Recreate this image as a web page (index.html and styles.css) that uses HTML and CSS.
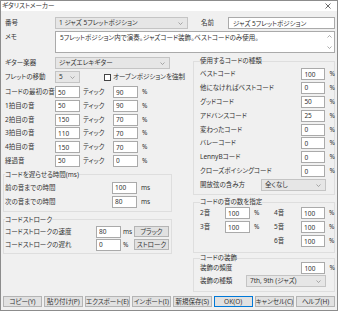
FILE: index.html
```html
<!DOCTYPE html>
<html lang="ja">

<head>
    <meta charset="UTF-8" />
    <title>ギタリストメーカー</title>
    <link rel="stylesheet" href="styles.css">
</head>

<body>
    <div class="window">
        <div class="titlebar">
            <span class="title">ギタリストメーカー</span>
            <svg class="close" width="6" height="6" viewBox="0 0 6 6"><path d="M0.5 0.5L5.5 5.5M5.5 0.5L0.5 5.5" stroke="#444" stroke-width="0.8" /></svg>
        </div>

        <div class="dialog">
            <div class="row head">
                <span class="lbl w50">番号</span>
                <div class="combo c-num"><span>1 ジャズ 5フレットポジション</span><svg class="chev" width="5" height="3" viewBox="0 0 5 3"><path d="M0.5 0.5L2.5 2.5L4.5 0.5" /></svg></div>
                <span class="lbl name-lbl">名前</span>
                <input class="txt name-in" type="text" value="ジャズ 5フレットポジション" />
            </div>

            <div class="memo-row">
                <span class="lbl w50 memo-lbl">メモ</span>
                <div class="memo">
                    <div class="memo-text">5フレットポジション内で演奏。ジャズコード装飾。ベストコードのみ使用。</div>
                    <div class="scroll">
                        <svg width="5" height="3" viewBox="0 0 5 3"><path d="M0.5 2.5L2.5 0.5L4.5 2.5" /></svg>
                        <svg width="5" height="3" viewBox="0 0 5 3"><path d="M0.5 0.5L2.5 2.5L4.5 0.5" /></svg>
                    </div>
                </div>
            </div>

            <div class="main">
                <!-- left side -->
                <div class="left">
                    <div class="row plain">
                        <span class="lbl w50">ギター楽器</span>
                        <div class="combo c-guitar"><span>ジャズエレキギター</span><svg class="chev" width="5" height="3" viewBox="0 0 5 3"><path d="M0.5 0.5L2.5 2.5L4.5 0.5" /></svg></div>
                    </div>
                    <div class="row plain fret">
                        <span class="lbl w50">フレットの移動</span>
                        <div class="combo c-fret"><span>5</span><svg class="chev" width="5" height="3" viewBox="0 0 5 3"><path d="M0.5 0.5L2.5 2.5L4.5 0.5" /></svg></div>
                        <span class="check"></span>
                        <span class="lbl">オープンポジションを強制</span>
                    </div>

                    <div class="row plain tick first">
                        <span class="lbl w50">コードの最初の音</span>
                        <input class="txt num" type="text" value="50" />
                        <span class="unit-tick">ティック</span>
                        <input class="txt num" type="text" value="90" />
                        <span class="unit">%</span>
                    </div>
                    <div class="row plain tick">
                        <span class="lbl w50">1拍目の音</span>
                        <input class="txt num" type="text" value="50" />
                        <span class="unit-tick">ティック</span>
                        <input class="txt num" type="text" value="90" />
                        <span class="unit">%</span>
                    </div>
                    <div class="row plain tick">
                        <span class="lbl w50">2拍目の音</span>
                        <input class="txt num" type="text" value="150" />
                        <span class="unit-tick">ティック</span>
                        <input class="txt num" type="text" value="70" />
                        <span class="unit">%</span>
                    </div>
                    <div class="row plain tick">
                        <span class="lbl w50">3拍目の音</span>
                        <input class="txt num" type="text" value="110" />
                        <span class="unit-tick">ティック</span>
                        <input class="txt num" type="text" value="70" />
                        <span class="unit">%</span>
                    </div>
                    <div class="row plain tick">
                        <span class="lbl w50">4拍目の音</span>
                        <input class="txt num" type="text" value="150" />
                        <span class="unit-tick">ティック</span>
                        <input class="txt num" type="text" value="70" />
                        <span class="unit">%</span>
                    </div>
                    <div class="row plain tick">
                        <span class="lbl w50">経過音</span>
                        <input class="txt num" type="text" value="50" />
                        <span class="unit-tick">ティック</span>
                        <input class="txt num" type="text" value="0" />
                        <span class="unit">%</span>
                    </div>

                    <fieldset class="group delay">
                        <legend>コードを遅らせる時間(ms)</legend>
                        <div class="row">
                            <span class="lbl w-delay">前の音までの時間</span>
                            <input class="txt num" type="text" value="100" />
                            <span class="unit">ms</span>
                        </div>
                        <div class="row gap2">
                            <span class="lbl w-delay">次の音までの時間</span>
                            <input class="txt num" type="text" value="80" />
                            <span class="unit">ms</span>
                        </div>
                    </fieldset>

                    <fieldset class="group stroke">
                        <legend>コードストローク</legend>
                        <div class="row">
                            <span class="lbl w-stroke">コードストロークの速度</span>
                            <input class="txt num" type="text" value="80" />
                            <span class="unit-s">ms</span>
                            <button class="small-btn">ブラック</button>
                        </div>
                        <div class="row gap1">
                            <span class="lbl w-stroke">コードストロークの遅れ</span>
                            <input class="txt num" type="text" value="0" />
                            <span class="unit-s">%</span>
                            <button class="small-btn">ストローク</button>
                        </div>
                    </fieldset>
                </div>

                <!-- right side -->
                <div class="right">
                    <fieldset class="group kinds">
                        <legend>使用するコードの種類</legend>
                        <div class="row"><span class="lbl grow">ベストコード</span><input class="txt num-r" type="text" value="100" /><span class="unit-r">%</span></div>
                        <div class="row"><span class="lbl grow">他になければベストコード</span><input class="txt num-r" type="text" value="0" /><span class="unit-r">%</span></div>
                        <div class="row"><span class="lbl grow">グッドコード</span><input class="txt num-r" type="text" value="50" /><span class="unit-r">%</span></div>
                        <div class="row"><span class="lbl grow">アドバンスコード</span><input class="txt num-r" type="text" value="25" /><span class="unit-r">%</span></div>
                        <div class="row"><span class="lbl grow">変わったコード</span><input class="txt num-r" type="text" value="0" /><span class="unit-r">%</span></div>
                        <div class="row"><span class="lbl grow">バレーコード</span><input class="txt num-r" type="text" value="0" /><span class="unit-r">%</span></div>
                        <div class="row"><span class="lbl grow">LennyBコード</span><input class="txt num-r" type="text" value="0" /><span class="unit-r">%</span></div>
                        <div class="row"><span class="lbl grow">クローズボイシングコード</span><input class="txt num-r" type="text" value="0" /><span class="unit-r">%</span></div>
                        <div class="row open">
                            <span class="lbl w-open">開放弦の含み方</span>
                            <div class="combo c-open"><span>全くなし</span><svg class="chev" width="5" height="3" viewBox="0 0 5 3"><path d="M0.5 0.5L2.5 2.5L4.5 0.5" /></svg></div>
                        </div>
                    </fieldset>

                    <fieldset class="group notes">
                        <legend>コードの音の数を指定</legend>
                        <div class="note-grid">
                            <span class="lbl">2音</span><input class="txt num" type="text" value="100" /><span class="unit">%</span>
                            <span class="lbl">4音</span><input class="txt num-r" type="text" value="100" /><span class="unit">%</span>
                            <span class="lbl">3音</span><input class="txt num" type="text" value="100" /><span class="unit">%</span>
                            <span class="lbl">5音</span><input class="txt num-r" type="text" value="100" /><span class="unit">%</span>
                            <span></span><span></span><span></span>
                            <span class="lbl">6音</span><input class="txt num-r" type="text" value="100" /><span class="unit">%</span>
                        </div>
                    </fieldset>

                    <fieldset class="group deco">
                        <legend>コードの装飾</legend>
                        <div class="row"><span class="lbl grow">装飾の頻度</span><input class="txt num-r" type="text" value="100" /><span class="unit-r">%</span></div>
                        <div class="row gap1">
                            <span class="lbl w-deco">装飾の種類</span>
                            <div class="combo c-deco"><span>7th, 9th (ジャズ)</span><svg class="chev" width="5" height="3" viewBox="0 0 5 3"><path d="M0.5 0.5L2.5 2.5L4.5 0.5" /></svg></div>
                        </div>
                    </fieldset>
                </div>
            </div>

            <div class="buttons">
                <button>コピー(Y)</button>
                <button>貼り付け(P)</button>
                <button>エクスポート(E)</button>
                <button>インポート(I)</button>
                <button>新規保存(S)</button>
                <button class="default">OK(O)</button>
                <button>キャンセル(C)</button>
                <button>ヘルプ(H)</button>
            </div>
        </div>
    </div>
</body>

</html>
```

FILE: styles.css
```css
* {
    box-sizing: border-box;
}

body {
    margin: 0;
    font-family: "Noto Sans", "Noto Sans CJK JP", sans-serif;
    font-size: 6.5px;
    font-feature-settings: "palt";
    line-height: 8px;
    color: #333;
}

/* Window frame */
.window {
    width: 338px;
    height: 311px;
    border: 1px solid #8c8c8c;
    background: #f0f0f0;
    display: flex;
    flex-direction: column;
}

.titlebar {
    height: 10px;
    flex: none;
    background: #fff;
    display: flex;
    align-items: center;
    justify-content: space-between;
    padding: 0 6px 0 1px;
}

.dialog {
    flex: 1;
    display: flex;
    flex-direction: column;
    padding: 6px 2px 3px 2px;
}

/* Generic rows */
.row {
    display: flex;
    align-items: center;
    height: 12px;
}

.lbl {
    flex: none;
    white-space: nowrap;
}

.grow {
    flex: 1;
}

.w50 {
    width: 50px;
}

.txt {
    flex: none;
    height: 12px;
    margin: 0;
    padding: 0 2px;
    border: 1px solid #aaa;
    background: #fff;
    font: inherit;
    color: #333;
    outline: none;
}

.num {
    width: 25px;
}

.num-r {
    width: 24px;
}

.unit {
    padding-left: 4px;
}

.unit-r {
    width: 9px;
    padding-left: 4px;
}

.combo {
    flex: none;
    height: 12px;
    display: flex;
    align-items: center;
    justify-content: space-between;
    padding: 0 4px 0 3px;
    border: 1px solid #c4c4c4;
    background: #e6e6e6;
    white-space: nowrap;
}

.chev path,
.scroll path {
    fill: none;
    stroke: #888;
    stroke-width: 0.7;
}

/* Top rows */
.head {
    padding-left: 2px;
}

.c-num {
    width: 133px;
}

.name-lbl {
    width: 27px;
    margin-left: 13px;
}

.name-in {
    flex: 1;
    padding-left: 4px;
}

.memo-row {
    display: flex;
    height: 22px;
    margin-top: 2px;
    padding-left: 2px;
}

.memo-lbl {
    padding-top: 2px;
}

.memo {
    flex: 1;
    display: flex;
    border: 1px solid #aaa;
    background: #fff;
}

.memo-text {
    flex: 1;
    padding: 2px 4px;
    white-space: nowrap;
    overflow: hidden;
}

.scroll {
    width: 10px;
    display: flex;
    flex-direction: column;
    justify-content: space-between;
    align-items: center;
    padding: 3px 0;
}

/* Two columns */
.main {
    display: flex;
    gap: 21px;
    margin-top: 4px;
}

.left {
    width: 169px;
    display: flex;
    flex-direction: column;
}

.right {
    flex: 1;
    display: flex;
    flex-direction: column;
}

.plain {
    padding-left: 2px;
}

.c-guitar {
    width: 115px;
}

.fret {
    margin-top: 2px;
}

.c-fret {
    width: 25px;
    padding: 0 4px 0 3px;
}

.check {
    flex: none;
    width: 7px;
    height: 7px;
    margin: 0 2px 0 24px;
    border: 1px solid #444;
    background: #fff;
}

.tick {
    margin-top: 1.8px;
}

.tick.first {
    margin-top: 3px;
}

.unit-tick {
    width: 33px;
    padding-left: 3px;
}

/* Group boxes */
.group {
    margin: 0;
    min-width: 0;
    border: 1px solid #dedede;
}

.group legend {
    padding: 0;
    line-height: 8px;
}

.delay {
    margin-top: 4px;
    padding: 3px 0 3px 1px;
}

.w-delay {
    width: 107px;
}

.gap1 {
    margin-top: 1px;
}

.gap2 {
    margin-top: 2px;
}

.stroke {
    margin-top: 4px;
    padding: 2px 0 2px 1px;
}

.w-stroke {
    width: 91px;
}

.unit-s {
    width: 13px;
    padding-left: 2px;
}

.small-btn {
    flex: none;
    width: 35px;
    height: 11px;
    padding: 0;
    border: 1px solid #b4b4b4;
    background: #e1e1e1;
    font: inherit;
    line-height: 9px;
    color: #333;
}

.kinds {
    padding: 3px 0 3px 6px;
}

.kinds .row + .row {
    margin-top: 1.9px;
}

.w-open {
    width: 61px;
}

.c-open {
    width: 65px;
}

.notes {
    margin-top: 3px;
    padding: 1px 0 5px 6px;
}

.note-grid {
    display: grid;
    grid-template-columns: 25px 25px 24px 27px 24px 1fr;
    grid-auto-rows: 12px;
    row-gap: 2px;
    align-items: center;
}

.deco {
    margin-top: 1px;
    padding: 0 0 4px 6px;
}

.w-deco {
    width: 46px;
}

.c-deco {
    width: 80px;
}

/* Bottom buttons */
.buttons {
    margin-top: auto;
    display: flex;
    gap: 2px;
    height: 11px;
}

.buttons button {
    flex: 1;
    padding: 0;
    border: 1px solid #b4b4b4;
    background: #e1e1e1;
    font: inherit;
    line-height: 9px;
    color: #333;
    white-space: nowrap;
}

.buttons .default {
    border-color: #0078d7;
}
```
